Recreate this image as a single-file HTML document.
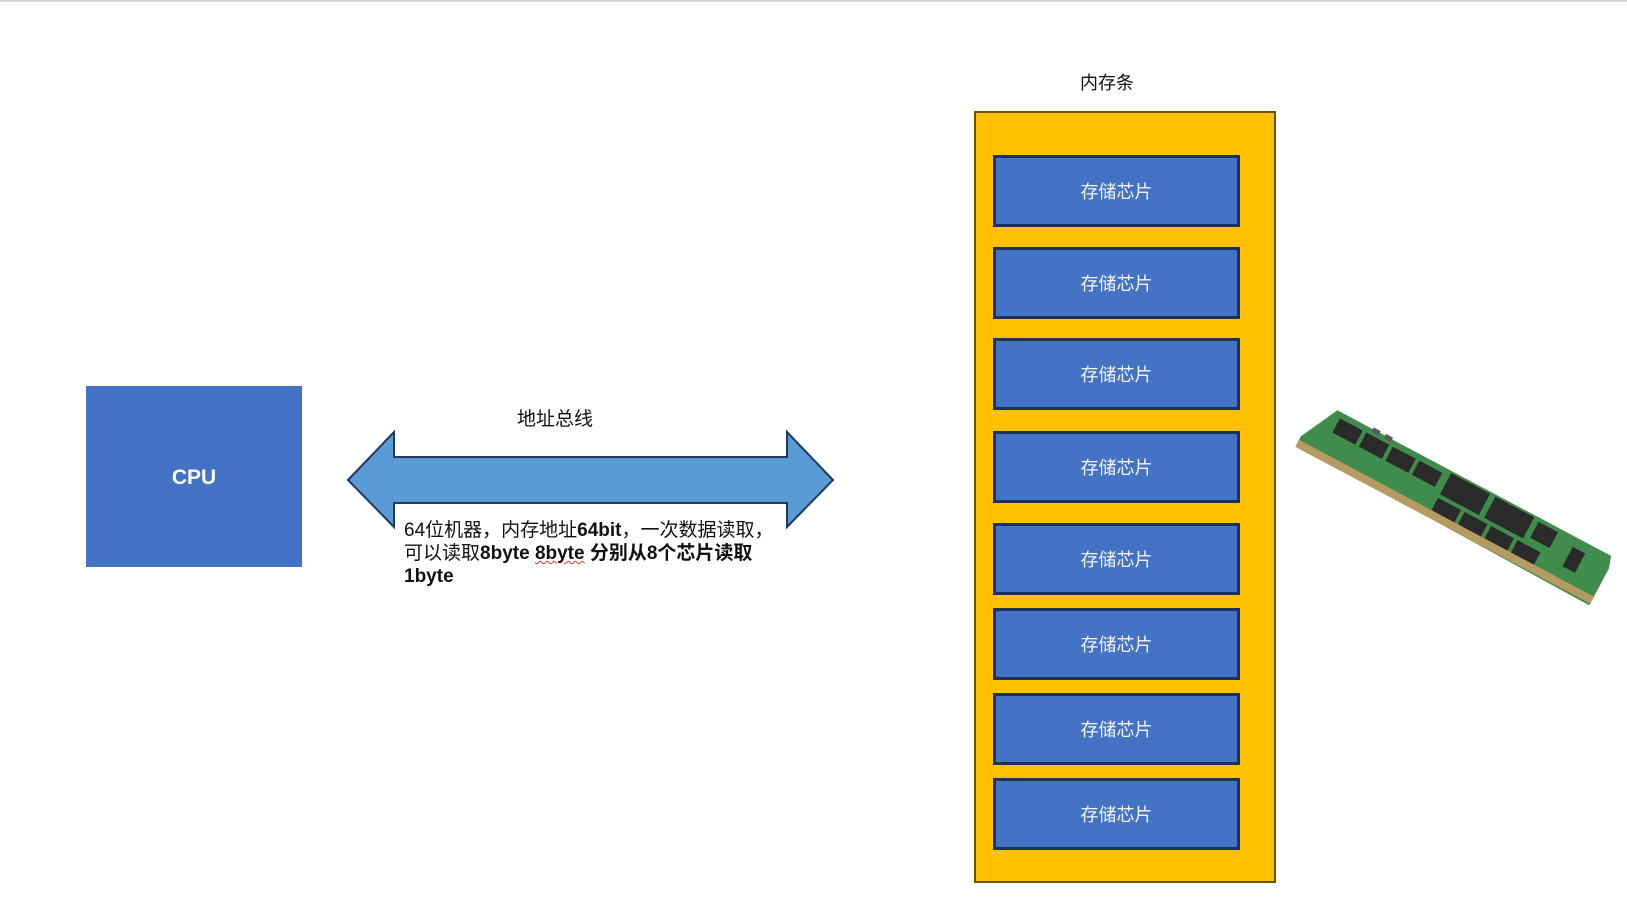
<!DOCTYPE html>
<html><head><meta charset="utf-8"><style>
body{margin:0;width:1627px;height:901px;background:#fff;position:relative;overflow:hidden;font-family:"Liberation Sans","Noto Sans CJK SC",sans-serif}
.top{position:absolute;left:0;top:0;width:1627px;height:2px;background:#d4d4d4}
.cpu{position:absolute;left:86px;top:386px;width:216px;height:181px;background:#4472c4;color:#fff;font-weight:bold;font-size:21px;display:flex;align-items:center;justify-content:center;padding-top:2px;box-sizing:border-box}
.lbl{position:absolute;font-size:19px;color:#111;white-space:nowrap}
.yel{position:absolute;left:974px;top:111px;width:298px;height:768px;background:#ffc000;border:2px solid #6b5200}
.chip{position:absolute;left:993px;width:241px;height:66px;background:#4472c4;border:3px solid #1b325c;color:#f4f6fb;font-size:18px;display:flex;align-items:center;justify-content:center}
.para{position:absolute;left:404px;top:519px;font-size:19px;line-height:23px;color:#111;width:420px}
.para b{font-weight:bold}
.sq{text-decoration:underline wavy #e03030;text-decoration-thickness:1px}
</style></head><body>
<div class="top"></div>
<div class="cpu">CPU</div>
<div class="lbl" style="left:517px;top:404px">地址总线</div>
<svg style="position:absolute;left:0;top:0" width="1627" height="901">
<polygon points="348,480 394,432 394,457 787,457 787,432 833,480 787,527 787,503 394,503 394,527" fill="#5b9bd5" stroke="#1f3b5c" stroke-width="2"/>
<g transform="translate(1300,438) rotate(28)">
<polygon points="0,-2 20,-42 330,-42 334,-30 334,12 0,8" fill="#3f8c4c"/>
<rect x="0" y="2" width="334" height="8" fill="#b59a62"/>
<g fill="#2a2a2a">
<rect x="26" y="-36" width="26" height="16"/><rect x="56" y="-36" width="26" height="16"/><rect x="86" y="-36" width="26" height="16"/><rect x="116" y="-36" width="26" height="16"/>
<rect x="150" y="-40" width="44" height="24"/><rect x="200" y="-40" width="44" height="24"/>
<rect x="150" y="-12" width="26" height="14"/><rect x="180" y="-12" width="26" height="14"/><rect x="210" y="-12" width="26" height="14"/><rect x="240" y="-12" width="26" height="14"/>
<rect x="250" y="-38" width="22" height="18"/>
<rect x="292" y="-32" width="14" height="22"/>
</g>
<g fill="#5a5a5a"><rect x="60" y="-44" width="8" height="5"/><rect x="74" y="-44" width="8" height="5"/></g>
</g>
</svg>
<div class="para">64位机器，内存地址<b>64bit</b>，一次数据读取，<br>可以读取<b>8byte <span class="sq">8byte</span> 分别从8个芯片读取<br>1byte</b></div>
<div class="lbl" style="left:1080px;top:69px;font-size:18px">内存条</div>
<div class="yel"></div>
<div class="chip" style="top:155px">存储芯片</div>
<div class="chip" style="top:247px">存储芯片</div>
<div class="chip" style="top:338px">存储芯片</div>
<div class="chip" style="top:431px">存储芯片</div>
<div class="chip" style="top:523px">存储芯片</div>
<div class="chip" style="top:608px">存储芯片</div>
<div class="chip" style="top:693px">存储芯片</div>
<div class="chip" style="top:778px">存储芯片</div>
</body></html>
